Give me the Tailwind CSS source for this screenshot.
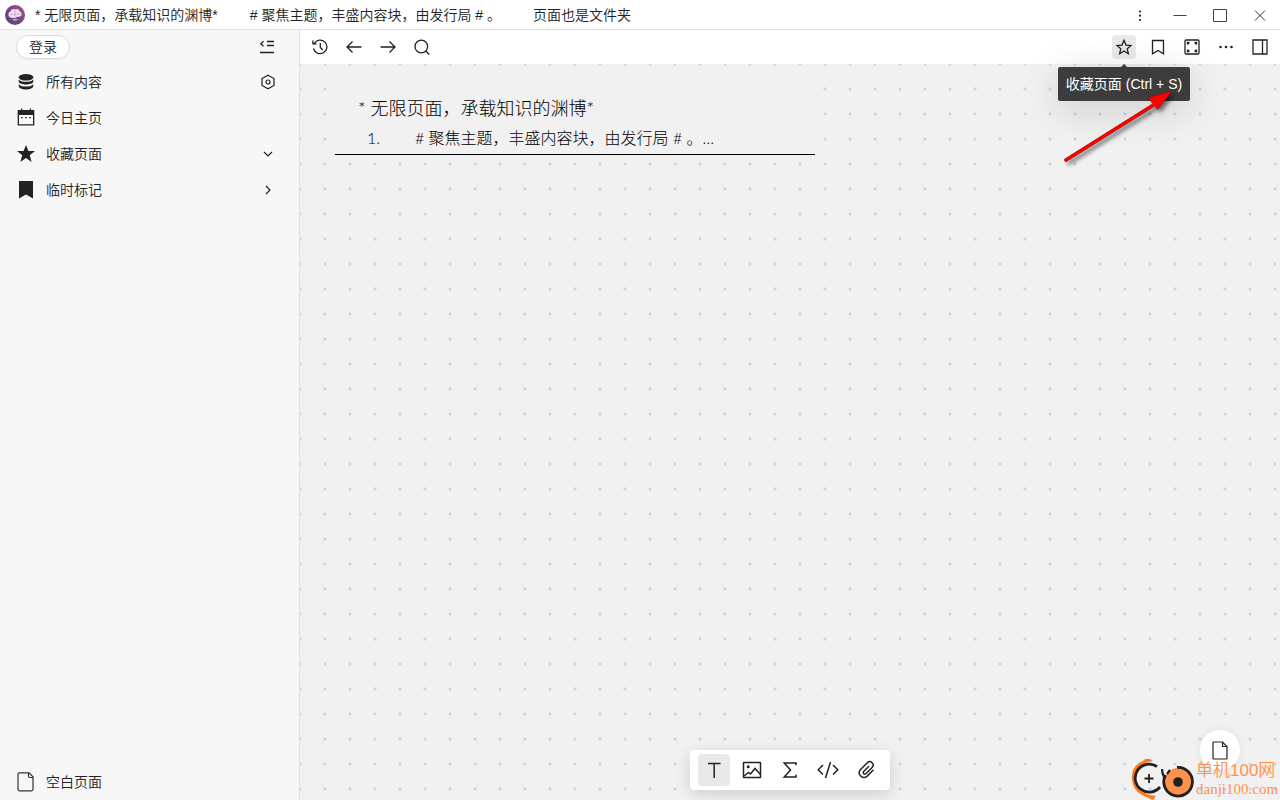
<!DOCTYPE html>
<html lang="zh-CN">
<head>
<meta charset="utf-8">
<title>无限页面</title>
<script src="https://cdn.jsdelivr.net/npm/@tailwindcss/browser@4"></script>
</head>
<body class="h-screen flex flex-col overflow-hidden bg-white text-[#222] text-sm font-[350] font-['Liberation_Sans','Noto_Sans_CJK_SC',sans-serif]">
<header class="h-[30px] shrink-0 flex items-center border-b border-[#e0e0e0] pl-[5px]">
  <svg class="size-5 shrink-0" viewBox="0 0 20 20" aria-hidden="true">
    <defs><linearGradient id="lg" x1="1" y1="0" x2="0" y2="1"><stop offset="0" stop-color="#a0508c"/><stop offset="1" stop-color="#54407c"/></linearGradient></defs>
    <circle cx="10" cy="10" r="10" fill="url(#lg)"/>
    <path d="M3.500 10.500C3 8 4.500 6.500 5.500 6.500 6 4 9 3.500 10 4.500 12 3.300 14 4.500 14.500 6 16.500 7 17 9 16.300 10.800 15 12.500 12.500 11.500 11 12.500 8.500 13.500 4.500 13.500 3.500 10.500Z" fill="#ecdcec"/>
    <path d="M5 9.500C7 8.500 8 10.500 10 9.500S13 9 15 9.500M10 5v6" fill="none" stroke="#b497bd" stroke-width=".6"/>
    <path d="M7 14.500c1.500-1 4.500-1 6 0-1 1.500-5 1.500-6 0z" fill="#c9a6c9"/>
  </svg>
  <nav class="flex flex-1 pl-2.5 gap-8 whitespace-nowrap" aria-label="标签页">
    <a href="#">* 无限页面，承载知识的渊博*</a>
    <a href="#"># 聚焦主题，丰盛内容块，由发行局 # 。</a>
    <a href="#">页面也是文件夹</a>
  </nav>
  <div class="flex">
    <button aria-label="更多" class="w-10 h-7 flex items-center justify-center"><svg class="size-4" viewBox="0 0 16 16" fill="#222"><circle cx="8" cy="4.500" r="1.100"/><circle cx="8" cy="8.700" r="1.100"/><circle cx="8" cy="13" r="1.100"/></svg></button>
    <button aria-label="最小化" class="w-10 h-7 flex items-center justify-center"><svg class="size-4" viewBox="0 0 16 16" fill="none" stroke="#444"><path d="M1.500 8.500h13"/></svg></button>
    <button aria-label="最大化" class="w-10 h-7 flex items-center justify-center"><svg class="size-4" viewBox="0 0 16 16" fill="none" stroke="#444"><path d="M1.500 2.500h13v12h-13z"/></svg></button>
    <button aria-label="关闭" class="w-10 h-7 flex items-center justify-center"><svg class="size-4" viewBox="0 0 16 16" fill="none" stroke="#333"><path d="M3 3.500l10 10M13 3.500l-10 10"/></svg></button>
  </div>
</header>
<div class="flex flex-1 min-h-0">
  <aside class="w-[300px] shrink-0 flex flex-col bg-[#f7f7f7] border-r border-[#e0e0e0] px-4">
    <div class="h-[34px] flex items-center justify-between">
      <button class="h-6 px-3 flex items-center rounded-full border border-[#dcdcdc] bg-white shadow-xs">登录</button>
      <button aria-label="收起侧栏" class="mr-2"><svg class="size-4" viewBox="0 0 16 16" fill="none" stroke="#222" stroke-width="1.300"><path d="M4.500 2.200L1.800 4.700 4.500 7.200M8 2.500h7M8 6.500h7M1 13.500h14"/></svg></button>
    </div>
    <nav class="flex flex-col" aria-label="侧栏">
      <div class="h-9 flex items-center justify-between pr-[7px]">
        <a href="#" class="flex items-center gap-2.5"><svg class="size-5" viewBox="0 0 20 20" fill="#222"><ellipse cx="10" cy="5.300" rx="7.300" ry="3.300"/><path d="M2.700 7.300c1 3.400 13.600 3.400 14.600 0v2.500c-1.200 3.600-13.400 3.600-14.600 0zM2.700 12c1 3.400 13.600 3.400 14.600 0v2.200c-1.200 4.400-13.400 4.400-14.600 0z"/></svg>所有内容</a>
        <button aria-label="设置"><svg class="size-4" viewBox="0 0 16 16" fill="none" stroke="#222" stroke-width="1.200"><path d="M8 1.300l6 3.200v7L8 14.700l-6-3.200v-7z"/><circle cx="8" cy="8" r="2"/></svg></button>
      </div>
      <a href="#" class="h-9 flex items-center gap-2.5"><svg class="size-5" viewBox="0 0 20 20"><path fill="#222" fill-rule="evenodd" d="M1.700 2H5V.5h1.200V2h7.600V.5H15V2h3.300v15.500H1.700zM3 7v9.200h14V7z"/><path d="M5 9h1.600v1.300H5zM9.200 9h1.600v1.300H9.200zM13.400 9H15v1.300h-1.600z" fill="#222"/></svg>今日主页</a>
      <button class="h-9 flex items-center justify-between pr-[7px]"><span class="flex items-center gap-2.5"><svg class="size-5" viewBox="0 0 20 20" fill="#222"><path d="M10 1l2.400 6H19l-5.300 4.200 2 6.800L10 14l-5.700 4 2-6.800L1 7h6.600z"/></svg>收藏页面</span><svg class="size-4" viewBox="0 0 16 16" fill="none" stroke="#222" stroke-width="1.200"><path d="M4 6l4 4 4-4"/></svg></button>
      <button class="h-9 flex items-center justify-between pr-[7px]"><span class="flex items-center gap-2.5"><svg class="size-5" viewBox="0 0 20 20" fill="#222"><path d="M3 1h14v17.500l-7-4-7 4z"/></svg>临时标记</span><svg class="size-4" viewBox="0 0 16 16" fill="none" stroke="#222" stroke-width="1.200"><path d="M6 4l4 4-4 4"/></svg></button>
    </nav>
    <a href="#" class="mt-auto h-9 flex items-center gap-2.5"><svg class="size-5" viewBox="0 0 20 20" fill="none" stroke="#333" stroke-width="1.200"><path d="M13 .8H3.500Q2 .8 2 2.300v15Q2 18.800 3.500 18.800h12q1.500 0 1.500-1.500V4.800z"/><path d="M12.500 1v3q0 1.500 1.500 1.500h3"/></svg>空白页面</a>
  </aside>
  <main class="relative flex-1 min-w-0 flex flex-col">
    <div class="h-[34px] shrink-0 px-2 flex items-center justify-between" role="toolbar">
      <div class="flex gap-2.5">
        <button aria-label="历史" class="size-6 flex items-center justify-center"><svg class="size-4" viewBox="0 0 16 16" fill="none" stroke="#222" stroke-width="1.300"><path d="M2.200 4.500A6.800 6.800 0 1 1 1.500 9.500M.9 1.500V4.900h3.600M8.300 4v4.500l2.500 2.500"/></svg></button>
        <button aria-label="后退" class="size-6 flex items-center justify-center"><svg class="size-4" viewBox="0 0 16 16" fill="none" stroke="#222" stroke-width="1.300"><path d="M15.500 8H1M6.500 2.500L1 8l5.500 5.500"/></svg></button>
        <button aria-label="前进" class="size-6 flex items-center justify-center"><svg class="size-4" viewBox="0 0 16 16" fill="none" stroke="#222" stroke-width="1.300"><path d="M.5 8H15M9.500 2.500L15 8l-5.500 5.500"/></svg></button>
        <button aria-label="搜索" class="size-6 flex items-center justify-center"><svg class="size-4" viewBox="0 0 16 16" fill="none" stroke="#222" stroke-width="1.300"><circle cx="7.300" cy="7.500" r="6.300"/><path d="M11.800 12l3.500 3.500"/></svg></button>
      </div>
      <div class="flex gap-2.5">
        <div class="relative">
          <button aria-label="收藏页面" aria-describedby="tip" class="size-6 rounded bg-[#e9e9e9] flex items-center justify-center"><svg class="size-4" viewBox="0 0 16 16" fill="none" stroke="#222" stroke-width="1.300"><path d="M8 1.300l2 4.800 5.100.4-3.900 3.300 1.200 4.900L8 12l-4.400 2.700 1.200-4.900L.9 6.500l5.100-.4z"/></svg></button>
          <div id="tip" role="tooltip" class="absolute z-10 top-8 left-1/2 -translate-x-1/2 h-[34px] w-[132px] flex items-center justify-center rounded-xs bg-[#3c3c3c] text-white font-normal whitespace-nowrap shadow-[0_8px_40px_rgba(0,0,0,0.16)]">收藏页面 (Ctrl + S)
            <span class="absolute -top-[3px] left-1/2 -translate-x-1/2 border-x-[3px] border-x-transparent border-b-[3px] border-b-[#3c3c3c]"></span>
          </div>
          <svg class="absolute z-20 top-[50px] -left-[54px] w-[120px] h-[84px] max-w-none" viewBox="0 0 120 84" aria-hidden="true"><g class="drop-shadow-[3px_3px_2px_rgba(0,0,0,0.55)]"><path d="M8 75L94 21" stroke="#611" stroke-width="3.400" stroke-linecap="round"/><path d="M114 6L99.500 24.500 95.500 19.500 90 12.500z" fill="#f00" stroke="#611" stroke-width=".5"/><path d="M8 75L96 19.500" stroke="#f00" stroke-width="2.800" stroke-linecap="round"/></g></svg>
        </div>
        <button aria-label="标记" class="size-6 flex items-center justify-center"><svg class="size-4" viewBox="0 0 16 16" fill="none" stroke="#222" stroke-width="1.300"><path d="M2.500 1.500h11v13.300L8 11.500l-5.500 3.300z"/></svg></button>
        <button aria-label="全屏" class="size-6 flex items-center justify-center"><svg class="size-4" viewBox="0 0 16 16" fill="none" stroke="#222" stroke-width="1.300"><rect x="1" y="1" width="14" height="14" rx="1"/><path d="M3.500 5.500v-2h2M3.500 3.500l1.500 1.500M10.500 3.500h2v2M12.500 3.500L11 5M12.500 10.500v2h-2M12.500 12.500L11 11M5.500 12.500h-2v-2M3.500 12.500L5 11"/></svg></button>
        <button aria-label="更多操作" class="size-6 flex items-center justify-center"><svg class="size-4" viewBox="0 0 16 16" fill="#222"><circle cx="2.500" cy="8" r="1.300"/><circle cx="8" cy="8" r="1.300"/><circle cx="13.500" cy="8" r="1.300"/></svg></button>
        <button aria-label="右侧栏" class="size-6 flex items-center justify-center"><svg class="size-4" viewBox="0 0 16 16" fill="none" stroke="#222" stroke-width="1.300"><path d="M1 1h14v14H1zM10.500 1v14"/></svg></button>
      </div>
    </div>
    <section class="flex-1 bg-[#f1f1f1] pt-5 bg-[radial-gradient(circle_at_12px_12px,#d2d2d2_1px,transparent_2px)] bg-[length:25px_25px] bg-[position:13px_13px]">
      <article class="ml-[35px] w-[480px] h-[71px] bg-[#f1f1f1] border-b border-black text-black font-light font-['Lato','Noto_Sans_CJK_SC',sans-serif]">
        <h1 class="text-lg leading-7 pt-2.5 pl-[23px]">* 无限页面，承载知识的渊博*</h1>
        <p class="flex text-base leading-8 pl-8"><span class="w-12">1.</span><span># 聚焦主题，丰盛内容块，由发行局 # 。…</span></p>
      </article>
    </section>
    <div class="absolute bottom-2.5 left-1/2 -translate-x-1/2 h-10 px-2 gap-1.5 flex items-center bg-white rounded shadow-[0_4px_16px_rgba(0,0,0,0.15)]" role="toolbar">
      <button aria-label="文本" class="size-8 rounded-sm bg-[#e9e9e9] flex items-center justify-center"><svg class="size-5" viewBox="0 0 20 20" fill="none" stroke="#222" stroke-width="1.500"><path d="M4 3.500h12.500M10.200 3.500V18"/></svg></button>
      <button aria-label="图片" class="size-8 flex items-center justify-center"><svg class="size-5" viewBox="0 0 20 20" fill="none" stroke="#222" stroke-width="1.500"><rect x="1.500" y="2.500" width="17" height="15" rx=".5"/><path d="M2 16l4.500-3.500 2 1.500 4.500-5.500 5.500 6"/><circle cx="6.200" cy="6.800" r="1.500" fill="#222" stroke="none"/></svg></button>
      <button aria-label="公式" class="size-8 flex items-center justify-center"><svg class="size-5" viewBox="0 0 20 20" fill="none" stroke="#222" stroke-width="1.500"><path d="M16 5.200V3H4.200L10.500 10 4.200 17H16v-2.200"/></svg></button>
      <button aria-label="代码" class="size-8 flex items-center justify-center"><svg class="w-[22px] h-5" viewBox="0 0 22 20" fill="none" stroke="#222" stroke-width="1.500"><path d="M6 5L1.200 9.700 6 14.500M16 5l4.800 4.700-4.800 4.800M13.500 2L8.500 18"/></svg></button>
      <button aria-label="附件" class="size-8 flex items-center justify-center"><svg class="size-5" viewBox="0 0 24 24" fill="none" stroke="#222" stroke-width="1.800"><path d="M15.500 7.500l-6.300 6.300a1.800 1.800 0 0 0 2.600 2.600l7.500-7.500a4 4 0 0 0-5.700-5.700L5.200 11.600a5.700 5.700 0 0 0 8 8l7.800-7.800"/></svg></button>
    </div>
    <button aria-label="新建页面" class="absolute bottom-[30px] right-10 size-10 rounded-full bg-white flex items-center justify-center shadow-[0_0_10px_rgba(0,0,0,0.08)]"><svg class="size-5" viewBox="0 0 20 20" fill="none" stroke="#222" stroke-width="1.200"><path d="M12.500 2H3.500Q3 2 3 2.500v16q0 .5.500.5h13q.5 0 .5-.5v-12z"/><path d="M12.500 2v4.500H17"/></svg></button>
    <div class="absolute bottom-0 right-0 flex items-center gap-0.5 text-[#ff914d]">
      <svg class="w-16 h-[42px]" viewBox="0 0 64 42" fill="none" aria-hidden="true"><path d="M23 3C20 0 15 0 13 3 5 6 1 13 2 22 3 30 7 34 12 37L23 42 26 38C12 36 4 30 4.500 20 5 11 11 5 23 3Z" fill="#ff7a1c"/><path d="M27 8.500A14 14 0 1 0 30 29" stroke="#231f20" stroke-width="2.800"/><path d="M14.500 20.500h9M19 16v9" stroke="#231f20" stroke-width="1.800"/><circle cx="48" cy="24" r="14" fill="#ff914d"/><path d="M47 9.500A14.300 14.300 0 1 1 35.500 17" stroke="#231f20" stroke-width="2.800"/><circle cx="48" cy="24" r="4.800" fill="#231f20"/><path d="M32 11c0 5 2 8 3 10M40 12l-3 4" stroke="#231f20" stroke-width="2.200"/></svg>
      <div class="w-[84px] whitespace-nowrap"><p class="text-[17px] leading-5 font-['Liberation_Sans','Noto_Sans_CJK_SC',sans-serif]">单机100网</p><p class="text-[15px] leading-4 font-['Liberation_Serif',serif]">danji100.com</p></div>
    </div>
  </main>
</div>
</body>
</html>
